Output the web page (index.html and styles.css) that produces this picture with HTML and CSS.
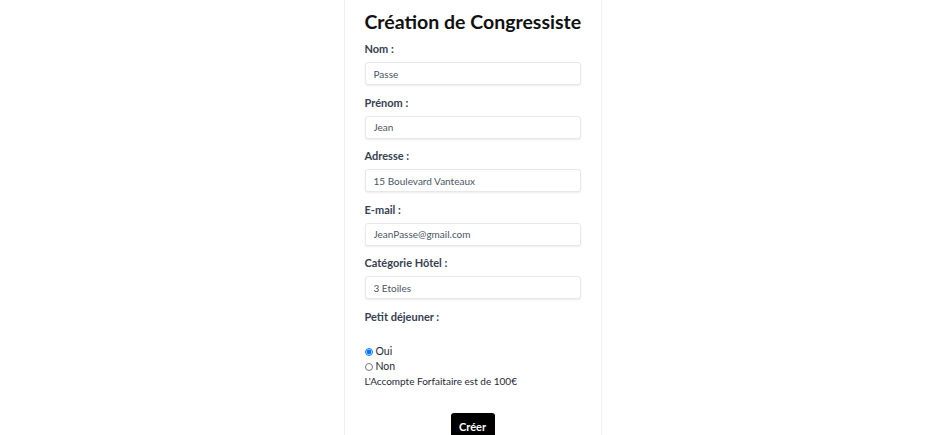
FILE: index.html
```html
<!DOCTYPE html>
<html lang="fr">
<head>
<meta charset="utf-8">
<title>Création de Congressiste</title>
<link rel="stylesheet" href="styles.css">
</head>
<body>
<div class="card">
  <h1 class="title">Création de Congressiste</h1>
  <form class="form">
    <div class="field">
      <label class="label">Nom :</label>
      <input class="input" type="text" value="Passe">
    </div>
    <div class="field">
      <label class="label">Prénom :</label>
      <input class="input" type="text" value="Jean">
    </div>
    <div class="field">
      <label class="label">Adresse :</label>
      <input class="input" type="text" value="15 Boulevard Vanteaux">
    </div>
    <div class="field">
      <label class="label">E-mail :</label>
      <input class="input" type="text" value="JeanPasse@gmail.com">
    </div>
    <div class="field">
      <label class="label">Catégorie Hôtel :</label>
      <input class="input" type="text" value="3 Etoiles">
    </div>
    <div class="field">
      <label class="label">Petit déjeuner :</label>
    </div>
    <div class="radios">
      <label class="radio"><input type="radio" name="pd" checked><span>Oui</span></label>
      <label class="radio"><input type="radio" name="pd"><span>Non</span></label>
      <p class="note">L'Accompte Forfaitaire est de 100€</p>
    </div>
    <div class="actions">
      <button class="btn" type="button">Créer</button>
    </div>
  </form>
</div>
</body>
</html>
```
FILE: styles.css
```css
html, body {
  margin: 0;
  padding: 0;
  background: #ffffff;
  font-family: Lato, "Open Sans", sans-serif;
}
.card {
  width: 258px;
  box-sizing: border-box;
  margin: 0 auto;
  padding: 8px 20px 0;
  height: 435px;
  overflow: hidden;
  border-left: 1px solid #f1f1f1;
  border-right: 1px solid #f1f1f1;
}
.title {
  margin: 0 0 5px;
  font-size: 19.5px;
  line-height: 28px;
  font-weight: 700;
  color: #111111;
  white-space: nowrap;
}
.form {
  display: flex;
  flex-direction: column;
}
.field {
  display: flex;
  flex-direction: column;
  margin-bottom: 9.5px;
}
.label {
  font-size: 11px;
  line-height: 16px;
  font-weight: 700;
  color: #374151;
  margin-bottom: 5px;
}
.input {
  height: 23px;
  box-sizing: border-box;
  width: 100%;
  border: 1px solid #e8e8e8;
  border-radius: 3px;
  box-shadow: 0 1px 2px rgba(0,0,0,0.08);
  padding: 0 8px;
  font-family: inherit;
  font-size: 10px;
  color: #4b5563;
  margin: 0;
}
.radios {
  margin-top: 5px;
  display: flex;
  flex-direction: column;
  font-size: 10.5px;
  line-height: 15px;
  color: #1f2937;
}
.radio {
  display: flex;
  align-items: center;
  gap: 3px;
}
.radio input {
  margin: 0;
  width: 8px;
  height: 8px;
}
.note {
  margin: 0;
  font-size: 10px;
}
.actions {
  display: flex;
  justify-content: center;
  margin-top: 24px;
}
.btn {
  background: #000000;
  color: #ffffff;
  border: 0;
  border-radius: 3px;
  font-family: inherit;
  font-weight: 700;
  font-size: 11px;
  padding: 0;
  height: 26px;
  width: 44px;
}
```
